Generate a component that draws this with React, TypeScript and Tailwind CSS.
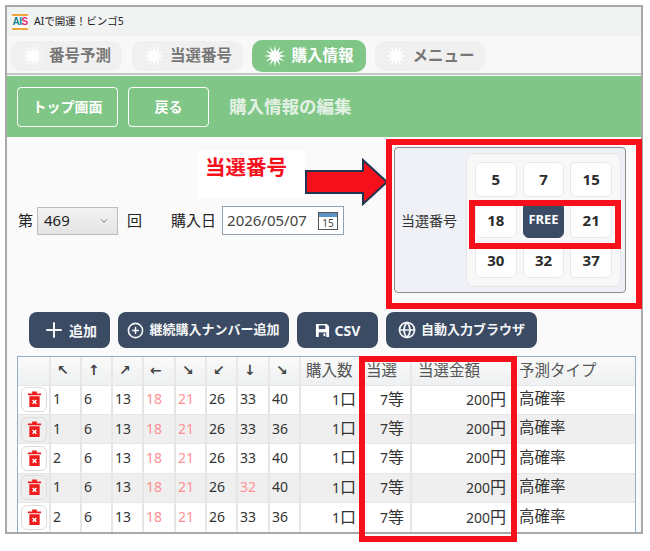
import { ChevronDown, Globe, Plus, PlusCircle } from "lucide-react";

const jp = "font-['Noto_Sans','Noto_Sans_CJK_JP',sans-serif]";

const tabs = [
  { label: "番号予測", active: false, w: "w-[111px]" },
  { label: "当選番号", active: false, w: "w-[111px] ml-px" },
  { label: "購入情報", active: true, w: "w-[114px]" },
  { label: "メニュー", active: false, w: "w-[110px]" },
];

const rows = [
  [1, 6, 13, 18, 21, 26, 33, 40],
  [1, 6, 13, 18, 21, 26, 33, 36],
  [2, 6, 13, 18, 21, 26, 33, 40],
  [1, 6, 13, 18, 21, 26, 32, 40],
  [2, 6, 13, 18, 21, 26, 33, 36],
];

const winning = [18, 21, 32];
const grid = ["5", "7", "15", "18", "FREE", "21", "30", "32", "37"];
const arrows = ["↖", "↑", "↗", "←", "↘", "↙", "↓", "↘"];

const burstPoints = Array.from({ length: 24 }, (_, i) => {
  const r = i % 2 === 0 ? 12 : 5;
  const a = (i * Math.PI) / 12;
  return `${(12 + r * Math.sin(a)).toFixed(2)},${(12 - r * Math.cos(a)).toFixed(2)}`;
}).join(" ");

const Burst = ({ className }: { className: string }) => (
  <svg viewBox="0 0 24 24" className={className} fill="currentColor">
    <polygon points={burstPoints} />
  </svg>
);

const TrashIcon = () => (
  <svg viewBox="0 0 16 18" className="w-[15px] h-[17px]">
    <path d="M5.5 1.5h5M1 3.5h14" stroke="#f01c1c" strokeWidth="2" fill="none" />
    <path d="M2.5 5.5h11V17h-11z" fill="#f01c1c" />
    <path d="M6 9.5l4 4M10 9.5l-4 4" stroke="#fff" strokeWidth="1.6" />
  </svg>
);

const FloppyIcon = () => (
  <svg viewBox="0 0 16 16" className="w-[15px] h-[15px]">
    <path d="M1 1h11.5L15 3.5V15H1z" fill="#fff" />
    <path d="M4 2.5h7v4H4z" fill="#3b4b63" />
    <path d="M4 10h8v5H4z" fill="#3b4b63" />
    <path d="M9 11h2v3H9z" fill="#fff" />
  </svg>
);

const CalendarIcon = () => (
  <svg viewBox="0 0 20 18" className="w-5 h-[18px]">
    <rect x="0.5" y="0.5" width="19" height="17" fill="#fff" stroke="#555" />
    <rect x="1" y="1" width="18" height="4" fill="#5b93c4" />
    <text x="10" y="15" textAnchor="middle" fontSize="10" fill="#444" fontFamily="Noto Sans">
      15
    </text>
  </svg>
);

const DarkButton = ({ w, children }: { w: string; children: React.ReactNode }) => (
  <button className={`${w} h-9 rounded-lg bg-[#3b4b63] text-[#f4f6f8] text-[13px] font-bold flex items-center justify-center gap-[5px]`}>
    {children}
  </button>
);

const Big = ({ children }: { children: React.ReactNode }) => <span className="text-[16px]">{children}</span>;

export default function App() {
  return (
    <div className={`${jp} relative w-[650px] h-[551px] bg-white overflow-hidden`}>
      <div className="ml-[5px] mt-[5px] w-[638px] h-[529px] border-2 border-[#a9a9a9] flex flex-col bg-[#fafafa] text-[#222]">
        {/* title bar */}
        <div className="h-[29px] shrink-0 bg-[#f1f3f3] flex items-center pl-[5px] gap-[6px] text-[10.5px]">
          <div className="w-4 h-4 bg-white border-y-2 border-[#f0a63a] flex items-center justify-center font-['Liberation_Sans'] text-[10px] font-bold leading-none tracking-[-0.5px]">
            <span className="text-[#0d7f8c]">AI</span>
            <span className="text-[#e0246c]">S</span>
          </div>
          <span>AIで開運！ビンゴ5</span>
        </div>

        {/* tabs */}
        <div className="h-[39px] shrink-0 bg-[#f8f8f8] border-b-2 border-[#c6c6c6] flex items-center pl-[4px] pt-[3px] gap-[9px]">
          {tabs.map((t) => (
            <div
              key={t.label}
              className={`${t.w} flex items-center justify-center gap-[5px] text-[15.5px] font-bold ${
                t.active
                  ? "h-8 rounded-[10px] bg-[#7fc687] text-white"
                  : "h-[30px] rounded-[10px] bg-[#f0f0f0] text-[#777]"
              }`}
            >
              <Burst className="w-[22px] h-[22px] text-white" />
              <span>{t.label}</span>
            </div>
          ))}
        </div>

        {/* green header */}
        <div className="h-[61px] shrink-0 bg-[#7fc687] mt-px flex items-center pl-[10px] gap-[10px]">
          <button className="w-[101px] h-10 rounded border border-white text-white text-[14px] font-bold">トップ画面</button>
          <button className="w-[81px] h-10 rounded border border-white text-white text-[14px] font-bold">戻る</button>
          <span className="ml-[10px] text-[17.5px] font-bold text-[#e3f1e4]">購入情報の編集</span>
        </div>

        {/* form + winning numbers */}
        <div className="h-[175px] shrink-0 flex items-start">
          <div className="w-[380px] mt-[69px] h-[29px] flex items-center pl-[11px] text-[15px]">
            <span>第</span>
            <div className="ml-[4px] w-[81px] h-[28px] border border-[#bcbcbc] bg-gradient-to-b from-[#f2f2f2] to-[#e4e4e4] flex items-center justify-between pl-1.5 pr-2">
              <span>469</span>
              <ChevronDown size={10} strokeWidth={2} className="text-[#555]" />
            </div>
            <span className="ml-[9px]">回</span>
            <span className="ml-[29px]">購入日</span>
            <div className="ml-1.5 w-[122px] h-[29px] border border-[#8fa1b3] bg-white flex items-center justify-between pl-1 pr-[5px]">
              <span className="text-[#444]">2026/05/07</span>
              <CalendarIcon />
            </div>
          </div>

          <div className="ml-[7px] mt-[10px] w-[232px] h-[146px] rounded border border-[#8c8c8c] bg-[#f0f1f6] flex items-center">
            <span className="w-[71px] pr-[3px] text-center text-[14px] text-[#333]">当選番号</span>
            <div className="w-[155px] h-[134px] rounded-lg border border-[#e6e6e8] bg-[#f8f8f9] grid grid-cols-3 gap-x-[6px] gap-y-[5px] px-[8px] py-[8px]">
              {grid.map((n) => (
                <div
                  key={n}
                  className={`rounded-md border flex items-center justify-center font-bold ${
                    n === "FREE"
                      ? "bg-[#3b4b63] border-[#3b4b63] text-white text-[13px]"
                      : "bg-white border-[#e8e8e8] text-[#2b2b2b] text-[15px]"
                  }`}
                >
                  {n}
                </div>
              ))}
            </div>
          </div>
        </div>

        {/* action buttons */}
        <div className="flex pl-[22px] gap-[8px] h-[36px] shrink-0">
          <DarkButton w="w-[81px]">
            <Plus size={24} strokeWidth={2} />
            <span className="text-[14px] -ml-[2px]">追加</span>
          </DarkButton>
          <DarkButton w="w-[171px]">
            <PlusCircle size={17} strokeWidth={2.25} />
            継続購入ナンバー追加
          </DarkButton>
          <DarkButton w="w-[81px]">
            <FloppyIcon />
            <span className="text-[14px]">CSV</span>
          </DarkButton>
          <DarkButton w="w-[151px]">
            <Globe size={18} strokeWidth={2.25} />
            自動入力ブラウザ
          </DarkButton>
        </div>

        {/* table */}
        <div className="ml-[10px] mt-[8px] w-[619px] flex-1 border border-b-0 border-[#8fb0cc] bg-white overflow-hidden">
          <table className="table-fixed w-full border-collapse text-[14px] text-[#333]">
            <colgroup>
              <col className="w-[32px]" />
              <col className="w-[31px]" />
              <col className="w-[31px]" />
              <col className="w-[31px]" />
              <col className="w-[32px]" />
              <col className="w-[31px]" />
              <col className="w-[31px]" />
              <col className="w-[32px]" />
              <col className="w-[31px]" />
              <col className="w-[60px]" />
              <col className="w-[51px]" />
              <col className="w-[102px]" />
              <col />
            </colgroup>
            <thead>
              <tr className="h-[28px] bg-gradient-to-b from-[#fafafa] to-[#eef0f1] text-[#555]">
                <th className="border-r-2 border-[#e8e8e8]" />
                {arrows.map((a, i) => (
                  <th key={i} className="border-r-2 border-[#e8e8e8] font-['DejaVu_Sans'] font-bold text-left pl-[6px] text-[14px] text-[#444]">
                    {a}
                  </th>
                ))}
                <th className="border-r-2 border-[#e8e8e8] font-normal text-left pl-[5px] text-[15.5px]">購入数</th>
                <th className="border-r-2 border-[#e8e8e8] font-normal text-left pl-[5px] text-[15.5px]">当選</th>
                <th className="border-r-2 border-[#e8e8e8] font-normal text-left pl-[6px] text-[15.5px]">当選金額</th>
                <th className="font-normal text-left pl-[5px] text-[15.5px]">予測タイプ</th>
              </tr>
            </thead>
            <tbody>
              {rows.map((r, i) => (
                <tr key={i} className={`h-[29.4px] ${i % 2 === 1 ? "bg-[#efefef]" : "bg-white"}`}>
                  <td className="border-r-2 border-t border-[#e6e6e6] pl-[3px]">
                    <div className="w-[26px] h-[25px] rounded-md border border-[#dcdcdc] flex items-center justify-center">
                      <TrashIcon />
                    </div>
                  </td>
                  {r.map((n, j) => (
                    <td
                      key={j}
                      className={`border-r-2 border-t border-[#e6e6e6] pl-[2px] pb-[2px] ${
                        (j === 3 || j === 4 || j === 6) && winning.includes(n) ? "text-[#ff8f93]" : ""
                      }`}
                    >
                      {n}
                    </td>
                  ))}
                  <td className="border-r-2 border-t border-[#e6e6e6] text-right pr-[3px] pb-[2px]">
                    1<Big>口</Big>
                  </td>
                  <td className="border-r-2 border-t border-[#e6e6e6] text-right pr-[6px] pb-[2px]">
                    7<Big>等</Big>
                  </td>
                  <td className="border-r-2 border-t border-[#e6e6e6] text-right pr-[6px] pb-[2px]">
                    200<Big>円</Big>
                  </td>
                  <td className="border-t border-[#e6e6e6] pl-[5px] pb-[2px] text-[15.5px]">高確率</td>
                </tr>
              ))}
            </tbody>
          </table>
        </div>
      </div>

      {/* annotations drawn over the screenshot */}
      <div className="absolute left-[198px] top-[151px] w-[107px] h-[48px] bg-white pl-[7px] pt-[1px] text-[20.5px] font-bold text-[#f5101c] leading-[30px]">
        当選番号
      </div>
      <svg className="absolute left-[305px] top-[158px] w-[84px] h-[48px]" viewBox="0 0 84 48">
        <path d="M1 13h57V2l24 22-24 22V35H1z" fill="#f5101c" stroke="#1f3552" strokeWidth="2" />
      </svg>
      <div className="absolute left-[386px] top-[139px] w-[256px] h-[170px] border-[6px] border-[#f5101c]" />
      <div className="absolute left-[469px] top-[200px] w-[152px] h-[49px] border-[6px] border-[#f5101c]" />
      <div className="absolute left-[359px] top-[356px] w-[158px] h-[186px] border-[6px] border-[#f5101c]" />
    </div>
  );
}
